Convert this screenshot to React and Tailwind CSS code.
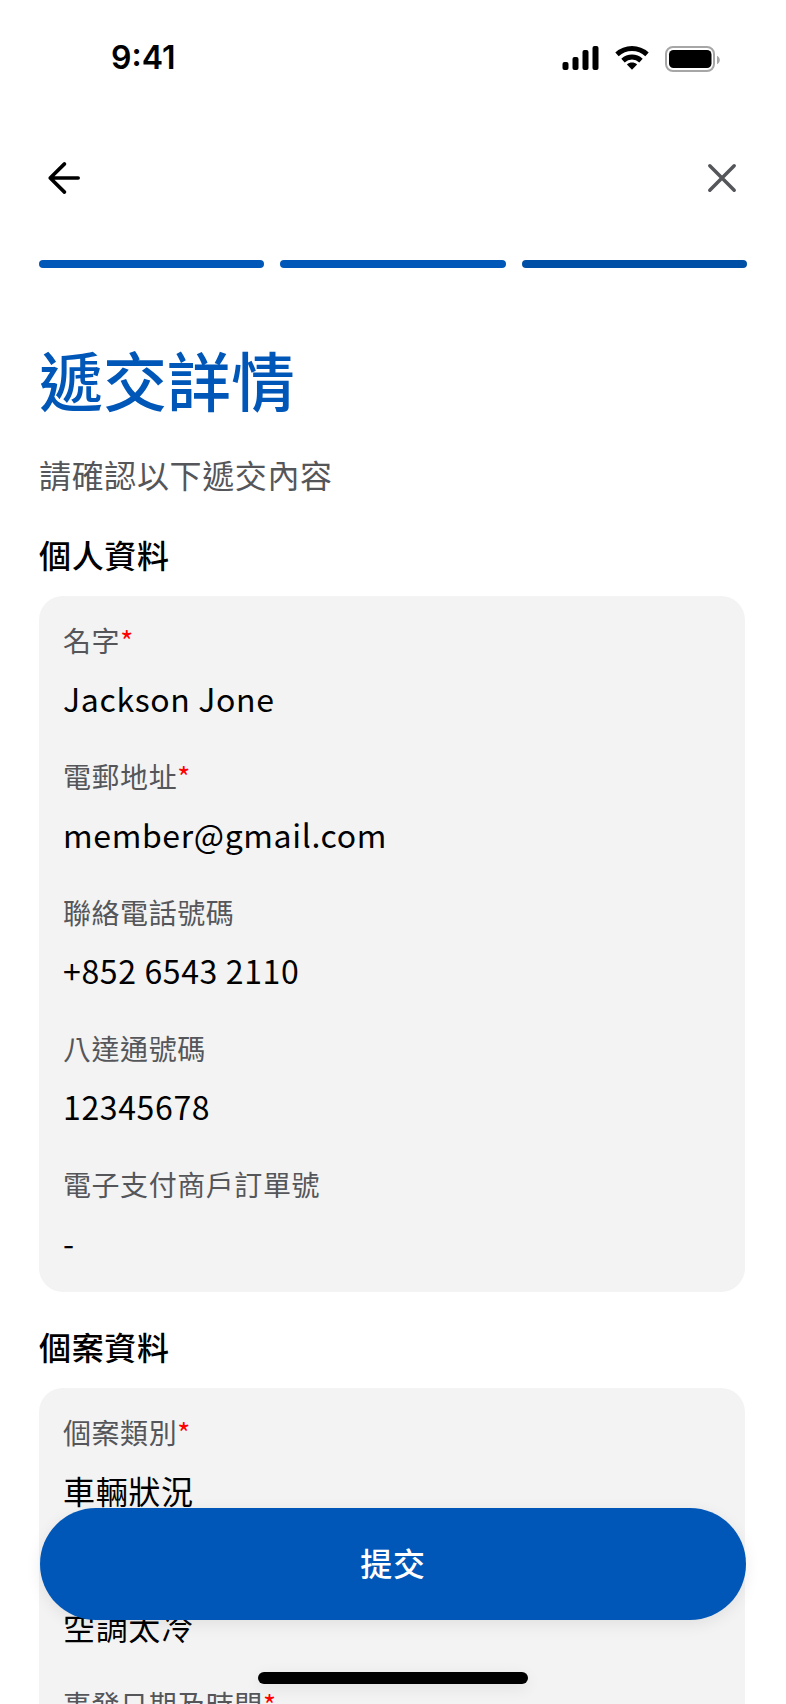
import React from "react";

const personal = [
  { label: "名字", value: "Jackson Jone", required: true },
  { label: "電郵地址", value: "member@gmail.com", required: true },
  { label: "聯絡電話號碼", value: "+852 6543 2110" },
  { label: "八達通號碼", value: "12345678" },
  { label: "電子支付商戶訂單號", value: "-" },
];

const caseInfo = [
  { label: "個案類別", value: "車輛狀況", required: true },
  { label: "個案詳情", value: "空調太冷", required: true },
  { label: "事發日期及時間", value: "", required: true },
];

function StatusBar() {
  return (
    <div className="flex h-[116px] items-center justify-between pl-[111px] pr-[65px]">
      <span className="font-['Inter',sans-serif] text-[32px] font-semibold leading-none">9:41</span>
      <div className="flex items-start pt-[2px]">
        <svg width="38" height="26" viewBox="0 0 38 26">
          <rect x="0.5" y="16" width="6" height="8" rx="2" />
          <rect x="10.5" y="11" width="6" height="13" rx="2" />
          <rect x="20.5" y="4" width="6" height="20" rx="2" />
          <rect x="30.5" y="0" width="6" height="24" rx="2" />
        </svg>
        <svg className="ml-[15px] mr-4" width="34" height="26" viewBox="0 0 34 26" fill="none" stroke="#000">
          <path d="M2 8.4C10.5 0.6 23.5 0.6 32 8.4" strokeWidth="5" />
          <path d="M8 14.6C13.2 9.9 20.8 9.9 26 14.6" strokeWidth="5" />
          <path d="M17 23.8L11.9 18.4C14.8 16 19.2 16 22.1 18.4Z" fill="#000" stroke="none" />
        </svg>
        <svg width="56" height="26" viewBox="0 0 56 26">
          <rect x="1" y="1" width="48" height="24" rx="7" fill="none" stroke="#a6a6a6" strokeWidth="2" />
          <rect x="4" y="4" width="42.500" height="18" rx="4.500" />
          <path d="M52 9.800v8.500c1.700-.7 2.800-2.400 2.800-4.250s-1.100-3.500-2.800-4.250z" fill="#a6a6a6" />
        </svg>
      </div>
    </div>
  );
}

function Field({ label, value, required }) {
  return (
    <div className="flex flex-col gap-3">
      <div className="h-11 text-[28px] leading-[40px] tracking-[0.56px] text-[#55565a]">
        {label}
        {required && <span className="text-[#ff0000]">*</span>}
      </div>
      <div className="h-12 text-[32px] leading-[44px] tracking-[0.64px]">{value}</div>
    </div>
  );
}

function Section({ title, fields }) {
  return (
    <section className="flex flex-col gap-4">
      <h2 className="h-12 text-[32px] font-medium leading-[44px] tracking-[0.64px]">{title}</h2>
      <div className="flex w-[706px] flex-col gap-8 rounded-3xl bg-[#f3f3f3] p-6">
        {fields.map((f) => (
          <Field key={f.label} {...f} />
        ))}
      </div>
    </section>
  );
}

export default function App() {
  return (
    <div
      lang="zh-Hant"
      className="relative h-[1704px] w-[786px] overflow-hidden bg-white font-['Noto_Sans_CJK_TC',sans-serif] text-black"
    >
      <StatusBar />
      <header className="flex h-[144px] items-start justify-between pl-10 pr-10 pt-[38px]">
        <svg width="48" height="48" viewBox="0 0 48 48" fill="none" stroke="#000" strokeWidth="3.600" strokeLinecap="round" strokeLinejoin="round">
          <path d="M38.200 24H10.200M24.500 9.900L10.200 24l14.300 14.100" />
        </svg>
        <svg width="48" height="48" viewBox="0 0 48 48" fill="none" stroke="#55565a" strokeWidth="3.500" strokeLinecap="round">
          <path d="M11.800 11.800l24.400 24.400M36.200 11.800L11.800 36.200" />
        </svg>
      </header>
      <div className="grid grid-cols-3 gap-4 px-[39px]">
        <div className="h-2 rounded-full bg-[#0057b8]" />
        <div className="h-2 rounded-full bg-[#0057b8]" />
        <div className="h-2 rounded-full bg-[#004fa6]" />
      </div>
      <main className="flex flex-col px-[39px] pt-[68px]">
        <h1 className="h-24 text-[64px] font-medium leading-[84px] text-[#0057b8]">遞交詳情</h1>
        <p className="mt-5 h-12 text-[32px] leading-[44px] tracking-[0.64px] text-[#55565a]">請確認以下遞交內容</p>
        <div className="mt-8 flex flex-col gap-8">
          <Section title="個人資料" fields={personal} />
          <Section title="個案資料" fields={caseInfo} />
        </div>
      </main>
      <button className="absolute left-[40px] top-[1508px] h-28 w-[706px] rounded-full bg-[#0057b8] pb-1 text-[32px] font-medium tracking-[0.64px] text-white shadow-[0_4px_16px_rgba(0,0,0,0.08)]">
        提交
      </button>
      <div className="absolute left-[258px] top-[1672px] h-3 w-[270px] rounded-full bg-black shadow-[0_4px_16px_rgba(0,0,0,0.08)]" />
    </div>
  );
}
